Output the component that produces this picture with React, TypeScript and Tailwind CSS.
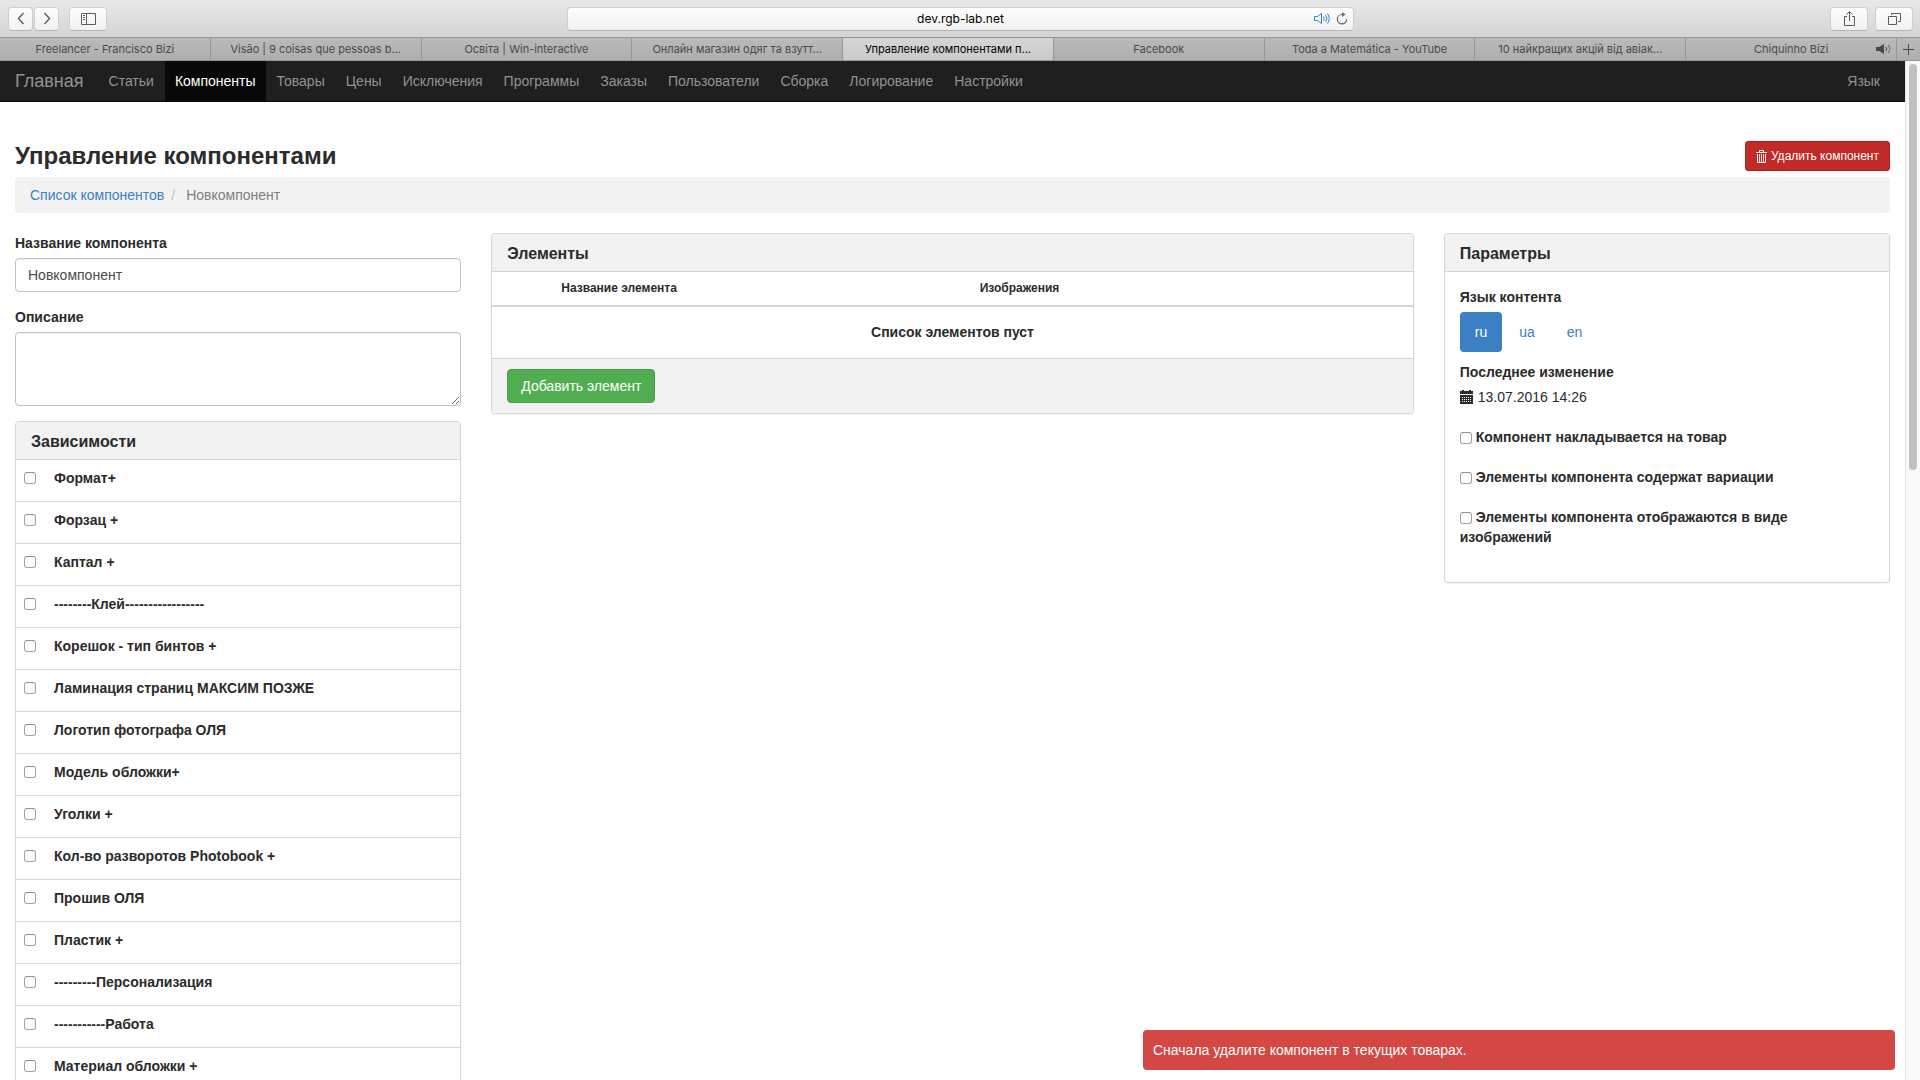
import React, { useState } from 'react';

interface Tab {
  title: string;
  active?: boolean;
  audio?: boolean;
}

const TABS: Tab[] = [
  { title: 'Freelancer - Francisco Bizi' },
  { title: 'Visão | 9 coisas que pessoas b...' },
  { title: 'Освіта | Win-interactive' },
  { title: 'Онлайн магазин одяг та взутт...' },
  { title: 'Управление компонентами п...', active: true },
  { title: 'Facebook' },
  { title: 'Toda a Matemática - YouTube' },
  { title: '10 найкращих акцій від авіак...' },
  { title: 'Chiquinho Bizi', audio: true },
];

const NAV = [
  'Статьи',
  'Компоненты',
  'Товары',
  'Цены',
  'Исключения',
  'Программы',
  'Заказы',
  'Пользователи',
  'Сборка',
  'Логирование',
  'Настройки',
];

const DEPENDENCIES = [
  'Формат+',
  'Форзац +',
  'Каптал +',
  '--------Клей-----------------',
  'Корешок - тип бинтов +',
  'Ламинация страниц МАКСИМ ПОЗЖЕ',
  'Логотип фотографа ОЛЯ',
  'Модель обложки+',
  'Уголки +',
  'Кол-во разворотов Photobook +',
  'Прошив ОЛЯ',
  'Пластик +',
  '---------Персонализация',
  '-----------Работа',
  'Материал обложки +',
];

const OPTIONS = [
  'Компонент накладывается на товар',
  'Элементы компонента содержат вариации',
  'Элементы компонента отображаются в виде изображений',
];

const LANGS = ['ru', 'ua', 'en'];

const toolButton =
  'flex h-6 items-center justify-center rounded border border-[#cfcfcf] border-b-[#b4b4b4] bg-linear-to-b from-[#fdfdfd] to-[#f2f2f2] text-[#5c5c5c]';

const checkbox =
  'size-3 appearance-none rounded-[3px] border border-[#a3a3a3] border-t-[#8f8f8f] bg-white checked:bg-[#3b80c3]';

const TrashIcon = () => (
  <svg width="11" height="13" viewBox="0 0 11 13" fill="none" stroke="currentColor" aria-hidden="true">
    <path d="M0 2.5h11M3.5 2V.5h4V2" />
    <path d="M1.5 4v8.5h8V4" />
    <path d="M3.5 4v8M5.5 4v8M7.5 4v8" strokeOpacity="0.8" />
  </svg>
);

const CalendarIcon = () => (
  <svg width="13" height="14" viewBox="0 0 13 14" aria-hidden="true">
    <path fill="currentColor" d="M0 1h2V0h2v1h5V0h2v1h2v3H0zM0 5h13v9H0z" />
    <path stroke="#fff" strokeDasharray="1 1" d="M2 7.5h9M2 9.5h9M2 11.5h9" />
  </svg>
);

const Panel = ({ title, children }: { title: string; children: React.ReactNode }) => (
  <section className="overflow-hidden rounded border border-[#d6d6d6] bg-white shadow-xs">
    <h3 className="border-b border-[#d6d6d6] bg-[#f2f2f2] px-[15px] pt-[10px] pb-2 text-base leading-[19px] font-bold">
      {title}
    </h3>
    {children}
  </section>
);

const BrowserChrome = () => (
  <header className="shrink-0 font-['Inter',sans-serif]">
    <div className="flex h-[37px] items-center justify-between bg-linear-to-b from-[#e8e8e8] to-[#d4d4d4] pr-[7px] pl-2">
      <div className="flex flex-1 gap-[10px]">
        <div className="flex gap-px">
          <button aria-label="Back" className={`${toolButton} w-[25px]`}>
            <svg width="8" height="13" viewBox="0 0 8 13" fill="none" stroke="currentColor" strokeWidth="1.4">
              <path d="M6.5 1 1.5 6.5l5 5.5" />
            </svg>
          </button>
          <button aria-label="Forward" className={`${toolButton} w-[25px]`}>
            <svg width="8" height="13" viewBox="0 0 8 13" fill="none" stroke="currentColor" strokeWidth="1.4">
              <path d="m1.5 1 5 5.5-5 5.5" />
            </svg>
          </button>
        </div>
        <button aria-label="Sidebar" className={`${toolButton} w-[38px]`}>
          <svg width="15" height="12" viewBox="0 0 15 12" fill="none" stroke="currentColor">
            <path d="M.5.5h14v11H.5zM5.5.5v11M2 2.5h2M2 4.5h2M2 6.5h2" />
          </svg>
        </button>
      </div>
      <div className="relative h-6 w-[41.3%]">
        <input
          aria-label="Address"
          defaultValue="dev.rgb-lab.net"
          className="h-6 w-full rounded border border-[#cfcfcf] border-b-[#b4b4b4] bg-linear-to-b from-[#fdfdfd] to-[#f2f2f2] text-center text-xs text-black"
        />
        <div className="absolute inset-y-0 right-[6px] flex items-center gap-[6px]">
          <svg width="16" height="11" viewBox="0 0 16 11" fill="none" stroke="#2a85ee">
            <path d="M.5 3.5h3l4-3v10l-4-3h-3z" />
            <path d="M9.5 3.5q1.5 2 0 4M11.5 2q3 3.5 0 7M13.500.5q3.500 5 0 10" />
          </svg>
          <svg width="12" height="13" viewBox="0 0 12 13" fill="none" stroke="#6a6a6a" strokeWidth="1.2">
            <path d="M6 2.5A4.7 4.7 0 1 0 10.7 7.2" />
            <path d="M6 0l3.5 2.5L6 5z" fill="#6a6a6a" stroke="none" />
          </svg>
        </div>
      </div>
      <div className="flex flex-1 justify-end gap-[7px]">
        <button aria-label="Share" className={`${toolButton} w-[38px]`}>
          <svg width="13" height="15" viewBox="0 0 13 15" fill="none" stroke="currentColor">
            <path d="M4 5.5H1.5v9h10v-9H9M6.5 10V1M3.5 3.5l3-3 3 3" />
          </svg>
        </button>
        <button aria-label="Show tabs" className={`${toolButton} w-[38px]`}>
          <svg width="13" height="12" viewBox="0 0 13 12" fill="none" stroke="currentColor">
            <path d="M.5 3.5h8v8h-8z" />
            <path d="M3.5 2V.5h9v8H10" />
          </svg>
        </button>
      </div>
    </div>
    <div className="flex h-6 border-y border-[#979797] bg-linear-to-b from-[#bababa] to-[#aeaeae] text-[11px] text-[#4a4a4a]">
      {TABS.map(tab => (
        <button
          key={tab.title}
          className={`relative min-w-0 flex-1 truncate border-r border-[#979797] px-2 ${tab.active ? 'bg-linear-to-b from-[#d6d6d6] to-[#cacaca] text-black' : ''}`}
        >
          {tab.title}
          {tab.audio && (
            <svg className="absolute top-[6px] right-1" width="16" height="10" viewBox="0 0 16 10" fill="none" stroke="currentColor">
              <path d="M0 3h3l5-3v10L3 7H0z" fill="currentColor" stroke="none" />
              <path d="M10 3q1.5 2 0 4" />
              <path d="M12.5 1q3 4 0 8" strokeOpacity="0.7" />
            </svg>
          )}
        </button>
      ))}
      <button aria-label="New tab" className="flex w-[23px] items-center justify-center">
        <svg width="11" height="11" viewBox="0 0 11 11" stroke="currentColor">
          <path d="M5.5 0v11M0 5.5h11" />
        </svg>
      </button>
    </div>
  </header>
);

const Navbar = () => (
  <nav className="flex h-[41px] items-stretch gap-px border-b border-[#080808] bg-[#1f1f1f] px-[15px] text-sm text-[#929292]">
    <a href="#" className="flex items-center pr-[14px] text-lg">Главная</a>
    {NAV.map(item => (
      <a
        key={item}
        href="#"
        className={`flex items-center px-[10px] ${item === 'Компоненты' ? 'bg-[#080808] text-white' : ''}`}
      >
        {item}
      </a>
    ))}
    <a href="#" className="ml-auto flex items-center px-[10px]">Язык</a>
  </nav>
);

const App: React.FC = () => {
  const [lang, setLang] = useState('ru');

  return (
    <div className="flex h-screen flex-col overflow-hidden bg-white font-['Liberation_Sans',Arial,sans-serif] text-sm leading-5 text-[#2b2b2b]">
      <BrowserChrome />
      <div className="flex min-h-0 flex-1">
        <div className="relative min-w-0 flex-1 overflow-hidden">
          <Navbar />
          <main className="px-[15px] pt-[39px]">
            <div className="flex items-center justify-between pb-[6px]">
              <h1 className="text-2xl leading-7 font-bold">Управление компонентами</h1>
              <button className="flex h-[30px] items-center gap-1 rounded-[3px] border border-[#a92320] bg-[#c12a27] px-[10px] text-xs text-white">
                <TrashIcon />
                Удалить компонент
              </button>
            </div>
            <div className="mb-5 flex rounded bg-[#f2f2f2] px-[15px] py-2">
              <a href="#" className="text-[#3b80c3]">Список компонентов</a>
              <span className="px-[7px] text-[#c4c4c4]">/</span>
              <span className="pl-1 text-[#808080]">Новкомпонент</span>
            </div>

            <div className="grid grid-cols-4 items-start gap-[30px]">
              <div>
                <label htmlFor="name" className="mb-[5px] block font-bold">Название компонента</label>
                <input
                  id="name"
                  defaultValue="Новкомпонент"
                  className="mb-[15px] block h-[34px] w-full rounded border border-[#c2c2c2] px-3 text-[#4b4b4b] inset-shadow-2xs"
                />
                <label htmlFor="description" className="mb-[5px] block font-bold">Описание</label>
                <textarea
                  id="description"
                  className="mb-[15px] block h-[74px] w-full rounded border border-[#c2c2c2] px-3 py-[6px] inset-shadow-2xs"
                />
                <Panel title="Зависимости">
                  <ul>
                    {DEPENDENCIES.map(name => (
                      <li key={name} className="h-[42px] border-b border-[#d6d6d6] px-2 py-2">
                        <label className="flex items-center font-bold">
                          <input type="checkbox" className={`${checkbox} mr-[18px]`} />
                          {name}
                        </label>
                      </li>
                    ))}
                  </ul>
                </Panel>
              </div>

              <div className="col-span-2">
                <Panel title="Элементы">
                  <table className="w-full">
                    <thead>
                      <tr className="border-b-2 border-[#d6d6d6] text-left text-xs">
                        <th className="w-16" />
                        <th className="w-5/11 px-[5px] py-2 leading-[17px]">Название элемента</th>
                        <th className="px-[5px] py-2 leading-[17px]">Изображения</th>
                      </tr>
                    </thead>
                    <tbody>
                      <tr>
                        <td colSpan={3} className="py-[15px] text-center leading-[21px] font-bold">
                          Список элементов пуст
                        </td>
                      </tr>
                    </tbody>
                  </table>
                  <div className="border-t border-[#d6d6d6] bg-[#f2f2f2] px-[15px] py-[10px]">
                    <button className="h-[34px] rounded border border-[#46a047] bg-[#50ae51] px-[13px] text-white">
                      Добавить элемент
                    </button>
                  </div>
                </Panel>
              </div>

              <Panel title="Параметры">
                <div className="p-[15px]">
                  <p className="mb-[5px] font-bold">Язык контента</p>
                  <div className="mb-[10px] flex gap-[2px]">
                    {LANGS.map(code => (
                      <button
                        key={code}
                        onClick={() => setLang(code)}
                        className={`h-10 rounded px-[15px] ${lang === code ? 'bg-[#3b80c3] text-white' : 'text-[#3b80c3]'}`}
                      >
                        {code}
                      </button>
                    ))}
                  </div>
                  <p className="mb-[5px] font-bold">Последнее изменение</p>
                  <p className="mb-5 flex items-center gap-[5px]">
                    <CalendarIcon />
                    13.07.2016 14:26
                  </p>
                  {OPTIONS.map(option => (
                    <label key={option} className="mb-5 block font-bold">
                      <input type="checkbox" className={`${checkbox} mr-1 align-[-2px]`} />
                      {option}
                    </label>
                  ))}
                </div>
              </Panel>
            </div>
          </main>

          <div role="alert" className="absolute right-[10px] bottom-[10px] left-[60%] rounded bg-[#d34845] p-[10px] text-white">
            Сначала удалите компонент в текущих товарах.
          </div>
        </div>

        {/* Scrollbar */}
        <div className="w-[15px] shrink-0 border-l border-[#e4e4e4] bg-[#f9f9f9] px-[3px] pt-[3px]">
          <div className="h-[40%] rounded-full bg-[#c0c0c0]" />
        </div>
      </div>
    </div>
  );
};

export default App;
